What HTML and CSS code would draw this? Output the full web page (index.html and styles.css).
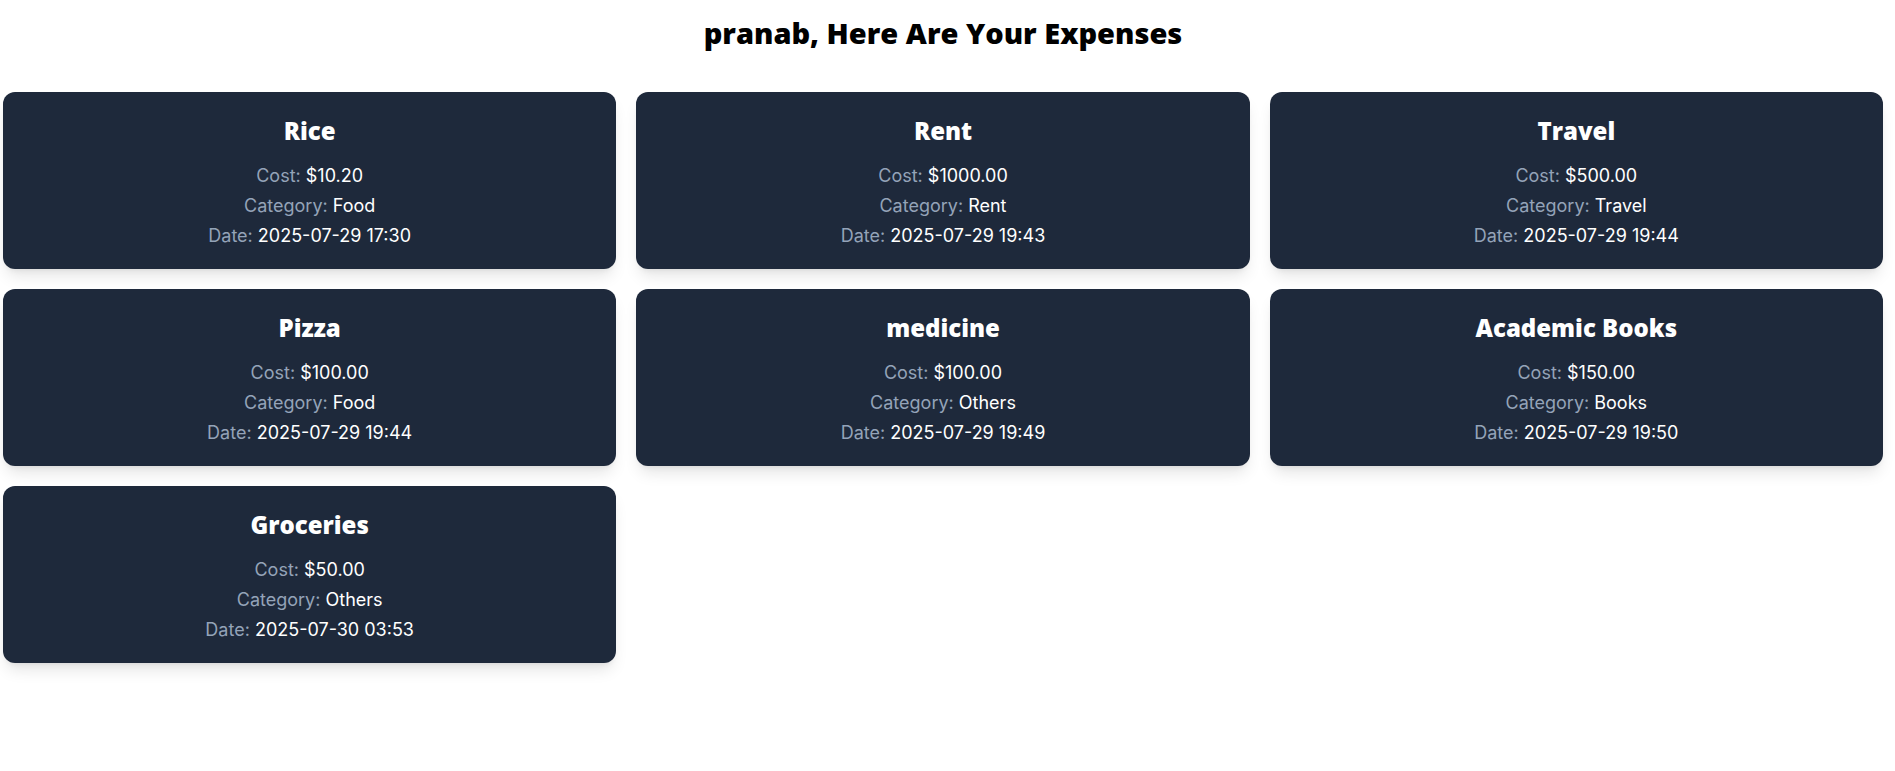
FILE: index.html
```html
<!DOCTYPE html>
<html lang="en">
<head>
<meta charset="utf-8">
<title>Expenses</title>
<link rel="stylesheet" href="styles.css">
</head>
<body>
<main class="page">
  <h1 class="page-title">pranab, Here Are Your Expenses</h1>
  <section class="grid">
    <article class="card">
      <h2 class="card-title">Rice</h2>
      <p class="line"><span class="label">Cost:</span> $10.20</p>
      <p class="line"><span class="label">Category:</span> Food</p>
      <p class="line"><span class="label">Date:</span> 2025-07-29 17:30</p>
    </article>
    <article class="card">
      <h2 class="card-title">Rent</h2>
      <p class="line"><span class="label">Cost:</span> $1000.00</p>
      <p class="line"><span class="label">Category:</span> Rent</p>
      <p class="line"><span class="label">Date:</span> 2025-07-29 19:43</p>
    </article>
    <article class="card">
      <h2 class="card-title">Travel</h2>
      <p class="line"><span class="label">Cost:</span> $500.00</p>
      <p class="line"><span class="label">Category:</span> Travel</p>
      <p class="line"><span class="label">Date:</span> 2025-07-29 19:44</p>
    </article>
    <article class="card">
      <h2 class="card-title">Pizza</h2>
      <p class="line"><span class="label">Cost:</span> $100.00</p>
      <p class="line"><span class="label">Category:</span> Food</p>
      <p class="line"><span class="label">Date:</span> 2025-07-29 19:44</p>
    </article>
    <article class="card">
      <h2 class="card-title">medicine</h2>
      <p class="line"><span class="label">Cost:</span> $100.00</p>
      <p class="line"><span class="label">Category:</span> Others</p>
      <p class="line"><span class="label">Date:</span> 2025-07-29 19:49</p>
    </article>
    <article class="card">
      <h2 class="card-title">Academic Books</h2>
      <p class="line"><span class="label">Cost:</span> $150.00</p>
      <p class="line"><span class="label">Category:</span> Books</p>
      <p class="line"><span class="label">Date:</span> 2025-07-29 19:50</p>
    </article>
    <article class="card">
      <h2 class="card-title">Groceries</h2>
      <p class="line"><span class="label">Cost:</span> $50.00</p>
      <p class="line"><span class="label">Category:</span> Others</p>
      <p class="line"><span class="label">Date:</span> 2025-07-30 03:53</p>
    </article>
  </section>
</main>
</body>
</html>
```
FILE: styles.css
```css
* { box-sizing: border-box; }
html, body { margin: 0; padding: 0; background: #ffffff; }
body { font-family: "Open Sans", "Noto Sans", sans-serif; }

.page {
  padding: 15px 12px 40px 3px;
}

.page-title {
  margin: 0 0 41px;
  text-align: center;
  font-size: 29px;
  line-height: 36px;
  font-weight: 800;
  color: #000;
}

.grid {
  display: grid;
  grid-template-columns: repeat(3, 1fr);
  gap: 20px;
}

.card {
  background: #1e293b;
  border-radius: 12px;
  padding: 23px 24px 18px;
  text-align: center;
  color: #ffffff;
  box-shadow: 0 10px 15px -3px rgba(0,0,0,0.1), 0 4px 6px -4px rgba(0,0,0,0.1);
}

.card-title {
  margin: 0 0 14px;
  font-size: 24px;
  line-height: 32px;
  font-weight: 800;
}

.line {
  margin: 0;
  font-family: "Inter", "Open Sans", sans-serif;
  font-size: 18px;
  line-height: 30px;
}

.label { color: #94a3b8; }
```
